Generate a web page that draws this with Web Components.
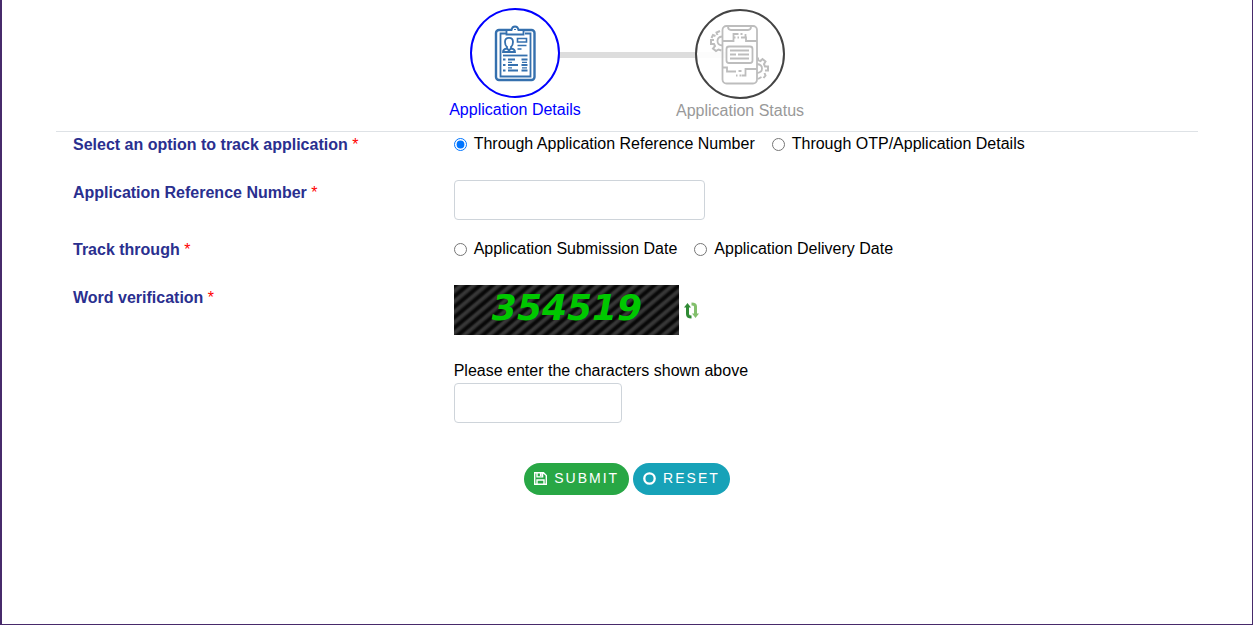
<!DOCTYPE html>
<html lang="en">
<head>
<meta charset="utf-8">
<meta name="viewport" content="width=device-width, initial-scale=1">
<title>Track Application</title>
<style>
body { margin: 0; background: #fff; color: #000; font: 16px/24px "Liberation Sans", Arial, sans-serif; }
</style>
</head>
<body>
<track-page></track-page>

<script>
const define = (name, html, setup) => {
  const template = document.createElement('template');
  template.innerHTML = html;
  customElements.define(name, class extends HTMLElement {
    connectedCallback() {
      if (this.shadowRoot) return;
      this.attachShadow({ mode: 'open' }).append(template.content.cloneNode(true));
      if (setup) setup(this, this.shadowRoot);
    }
  });
};

/* One step: round icon with its caption */
define('progress-step', `
<style>
:host { display: flex; flex-direction: column; align-items: center; color: #999; position: relative; }
:host([active]) { color: #00f; }
:host([later]) { padding-top: 1px; }
.ring { box-sizing: border-box; width: 90px; height: 90px; border: 2px solid #444; border-radius: 50%; background: rgba(255,255,255,.9); }
:host([active]) .ring { border-color: #00f; background: #fff; }
</style>
<div class="ring"><slot name="icon"></slot></div>
<slot></slot>`);

define('progress-steps', `
<style>
:host { display: grid; grid-template-columns: 224px 224px; column-gap: 1px; padding-left: 1px; width: max-content; margin: 0 auto; position: relative; }
.bar { position: absolute; left: 50%; width: 180px; height: 6px; top: 44px; margin-left: -80px; background: #ddd; }
</style>
<div class="bar"></div>
<slot></slot>`);

/* Label column and control column */
define('form-row', `
<style>
:host { display: grid; grid-template-columns: 1fr 2fr; }
div { padding: 0 17px; min-width: 0; }
.name { color: #2a2f8f; font-weight: bold; line-height: 26px; }
.name b { color: #f00; font-weight: normal; }
</style>
<div class="name"><slot name="label"></slot> <b>*</b></div>
<div><slot></slot></div>`);

define('captcha-image', `
<style>
:host { display: block; width: 225px; height: 50px; }
svg { display: block; }
text { font: italic bold 36px "DejaVu Sans", sans-serif; fill: #00c800; }
</style>
<svg width="225" height="50" viewBox="0 0 225 50" role="img">
  <defs>
    <linearGradient id="shade" x1="0" y1="0" x2="0" y2="1"><stop offset="0" stop-color="#080808"/><stop offset=".25" stop-color="#080808"/><stop offset=".5" stop-color="#3a3a3a"/><stop offset=".75" stop-color="#333"/><stop offset="1" stop-color="#080808"/></linearGradient>
    <pattern id="stripes" width="8" height="8" patternUnits="userSpaceOnUse" patternTransform="rotate(-40)">
      <rect width="8" height="8" fill="url(#shade)"/>
    </pattern>
  </defs>
  <rect width="225" height="50" fill="url(#stripes)"/>
  <text x="113" y="35" text-anchor="middle">354519</text>
</svg>`);

define('pill-button', `
<style>
:host { display: block; }
button { display: flex; align-items: center; gap: 7px; height: 32px; padding: 0 10px 2px; border: 0; border-radius: 16px;
  background: var(--pill); color: #fff; font: 14px/20px "Liberation Sans", Arial, sans-serif; letter-spacing: 2px; cursor: pointer; }
</style>
<button><slot name="icon"></slot><slot></slot></button>`, (host, root) => {
  const button = root.querySelector('button');
  button.type = 'button';
  button.addEventListener('click', () => {
    const form = host.closest('form');
    if (form && host.getAttribute('action') === 'reset') form.reset();
  });
});

define('track-form', `
<style>
:host { display: block; margin: 0 54px; }
form { border-top: 1px solid #dee2e6; margin: 0; }
form-row { margin-bottom: 17px; }
.first, .track { margin-bottom: 22px; }
.word { margin-bottom: 40px; }
.options { display: flex; flex-wrap: wrap; column-gap: 17px; }
.options label { display: flex; align-items: center; gap: 7px; line-height: 24px; }
input { box-sizing: border-box; }
input[type=radio] { width: 13px; height: 13px; margin: 0; }
input[type=text] { display: block; width: 251px; max-width: 100%; height: 40px; padding: 6px 12px; border: 1px solid #ced4da; border-radius: 4px; background: #fff; font: inherit; }
.code input[type=text] { width: 168px; }
.captcha { display: flex; align-items: center; gap: 5px; margin-bottom: 24px; }
.captcha button { display: block; border: 0; padding: 0; background: none; cursor: pointer; }
.code label { display: block; }
svg { display: block; }
.actions { display: flex; justify-content: center; gap: 4px; }
.submit { --pill: #28a745; }
.reset { --pill: #17a2b8; }
</style>
<form>
  <form-row class="first" role="group" aria-labelledby="way">
    <span slot="label" id="way">Select an option to track application</span>
    <div class="options">
      <label><input type="radio" name="way" checked>Through Application Reference Number</label>
      <label><input type="radio" name="way">Through OTP/Application Details</label>
    </div>
  </form-row>
  <form-row>
    <label slot="label" for="ref">Application Reference Number</label>
    <input type="text" id="ref">
  </form-row>
  <form-row class="track" role="group" aria-labelledby="date">
    <span slot="label" id="date">Track through</span>
    <div class="options">
      <label><input type="radio" name="date">Application Submission Date</label>
      <label><input type="radio" name="date">Application Delivery Date</label>
    </div>
  </form-row>
  <form-row class="word" role="group" aria-labelledby="word">
    <span slot="label" id="word">Word verification</span>
    <div class="captcha">
      <captcha-image></captcha-image>
      <button type="button" aria-label="Refresh">
        <svg width="15" height="17" viewBox="0 0 15 17" fill="none" stroke-width="3">
          <path d="M3.500 3v9q0 3 4 3" stroke="#2f8a34"/><path d="M0 5.500 3.500 1 7 5.500z" fill="#2f8a34"/>
          <path d="M7.500 2q4 0 4 2.600v9" stroke="#82bf6c"/><path d="M8 11.500h7l-3.500 4.500z" fill="#82bf6c"/>
        </svg>
      </button>
    </div>
    <div class="code">
      <label for="code">Please enter the characters shown above</label>
      <input type="text" id="code">
    </div>
  </form-row>
  <div class="actions">
    <pill-button class="submit" action="submit">
      <svg slot="icon" width="13" height="13" viewBox="0 0 13 13" fill="none" stroke="#fff" stroke-width="1.400"><path d="M.7.7h8.800l2.800 2.800v8.800H.7zM3 .7v4.200h5.600V.7M3 12.300V8h7v4.300"/><path d="M6.800 1v3" stroke-width="1.800"/></svg>SUBMIT</pill-button>
    <pill-button class="reset" action="reset">
      <svg slot="icon" width="13" height="13" viewBox="0 0 13 13"><circle cx="6.500" cy="6.500" r="5.200" fill="none" stroke="#fff" stroke-width="2.300"/></svg>RESET</pill-button>
  </div>
</form>`);

define('track-page', `
<style>
:host { display: block; box-sizing: border-box; min-height: 100vh; border: solid #472a6b; border-width: 0 1px 1px 2px; padding-top: 8px; }
progress-steps { margin-bottom: 8px; }
svg { display: block; }
</style>
<progress-steps>
  <progress-step active>
    <svg slot="icon" width="86" height="86" viewBox="472 10 86 86" fill="none" stroke="#3570ae">
      <rect x="496" y="30" width="38.500" height="50" rx="3" stroke-width="2.400"/>
      <path d="M506 33.500h-5.500v43h30v-43H525" stroke-width="1.800"/>
      <path d="M506.500 34.500v-4.500h5q.5-3.500 3.500-3.500t3.500 3.500h5v4.500z" fill="#fff" stroke-width="1.800"/>
      <path d="M514 29.500h2" stroke-width="1"/>
      <path d="M505 42c0-5.500 8-5.500 8 0 0 2-.8 4-2 5v1.500c3 .5 4 1.500 4 3.500h-12c0-2 1-3 4-3.500v-1.500c-1.200-1-2-3-2-5zM507.500 49l1.500 1.500 1.500-1.500" stroke-width="1.800"/>
      <path d="M517.500 38.500h9v3.500h-9zM517.500 45.500h9M517.500 49h4" stroke-width="1.600"/>
      <path d="M503 55.500h24.500" stroke-width="1.800"/>
      <path d="M503 59.500h2.500m2.500 0h7m6.500 0h6M503 65h2.500m2.500 0h10m3.500 0h6M503 70.500h2.500m2.500 0h10m3.500 0h6" stroke-width="1.800"/>
      <path d="M508 62.300h4m10 0h5M508 67.800h4m10 0h5" stroke-width="1.200"/>
    </svg>
    Application Details
  </progress-step>
  <progress-step later>
    <svg slot="icon" width="86" height="86" viewBox="697 11 86 86" fill="none" stroke="#bdbdbd" stroke-width="1.800">
      <rect x="722.500" y="26" width="34.500" height="57.500" rx="4"/>
      <path d="M728 26.500q0 3.500 3 3.500h17q3 0 3-3.500"/>
      <path d="M723 41h10.500v-7h5M757 41h-11v-3.500h-5M740.500 34h2M734 37.500h1.500m2 0h1.500M745.500 34v4"/>
      <path d="M723 67.500h4v4h9M757 69h-11.500v6.500h-4M738.500 71h3M736 75.500h1.500m2 0h1.500"/>
      <rect x="726.500" y="46.500" width="26" height="16.500" rx="2.500" fill="#fff"/>
      <path d="M730 50.500h19M730 54.500h6m2 0h11M730 58.500h19"/>
      <path d="M720 31l-3.500 1.500 1 2.500M715.500 36l-2.500-1-1.500 3M714 40h-3v4h3l1 2-2 2.500 3 2.500 2.500-1.500 3 1" stroke-width="2"/>
      <path d="M722 36.500q-4.500.5-4.500 4.500t4.500 4.500"/>
      <path d="M758 57.500v2.500l2.500 1 2-2 3 2.500-1.500 2.500 1 2.500h3v4h-3M764.500 73l1 2.500-2 2.500M761.500 77l-3.500 2" stroke-width="2"/>
      <path d="M757 64q5 .5 5 4.500t-5 4.500"/>
    </svg>
    Application Status
  </progress-step>
</progress-steps>
<track-form></track-form>`);
</script>
</body>
</html>
